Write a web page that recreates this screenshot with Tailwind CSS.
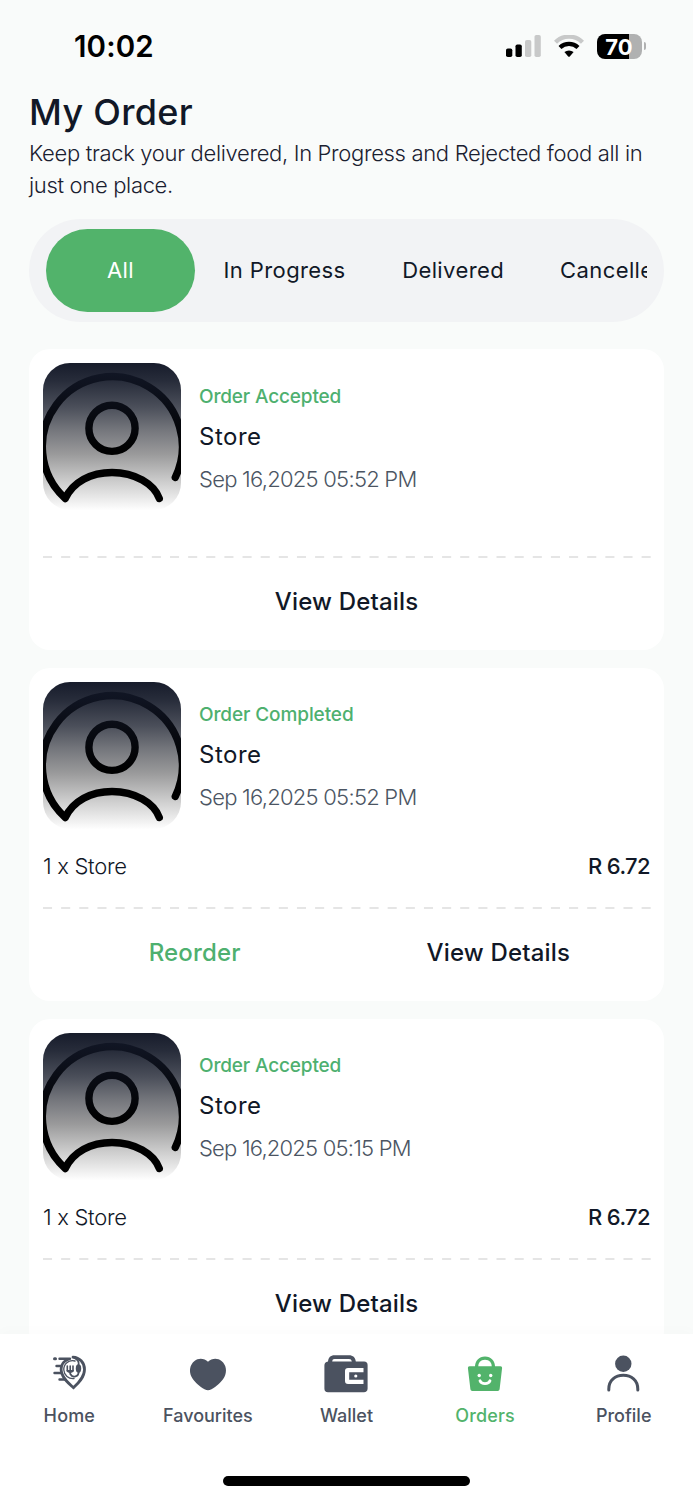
<!DOCTYPE html>
<html lang="en">
<head>
<meta charset="utf-8">
<title>My Order</title>
<script src="https://cdn.jsdelivr.net/npm/@tailwindcss/browser@4"></script>
</head>
<body class="relative flex h-[1500px] w-[693px] flex-col overflow-hidden bg-[#f9fbfa] font-['Inter','Liberation_Sans',sans-serif] text-[#111827]">

<svg class="absolute h-0 w-0" aria-hidden="true">
  <defs>
    <linearGradient id="bg" x1="0" y1="0" x2="0" y2="1">
      <stop offset="0" stop-color="#171c2b"/>
      <stop offset=".12" stop-color="#272c3a"/>
      <stop offset=".3" stop-color="#4b4f5a"/>
      <stop offset=".45" stop-color="#73757b"/>
      <stop offset=".62" stop-color="#9a9a9b"/>
      <stop offset=".8" stop-color="#cbcbcb"/>
      <stop offset="1" stop-color="#fefefe"/>
    </linearGradient>
    <linearGradient id="ink" gradientUnits="userSpaceOnUse" x1="0" y1="8" x2="0" y2="90">
      <stop offset="0" stop-color="#111625"/>
      <stop offset="1" stop-color="#000"/>
    </linearGradient>
    <symbol id="avatar" viewBox="0 0 138 147">
      <rect width="138" height="147" fill="url(#bg)"/>
      <g fill="none" stroke="url(#ink)" stroke-width="7.4" stroke-linecap="round" stroke-linejoin="round">
        <circle cx="69" cy="65.3" r="23.1"/>
        <path d="M132.3 114.3A70 70 0 1 0 22.3 135.5C30 119 48 109.500 69 109.500C92 109.500 111 121 116.300 135.500"/>
      </g>
    </symbol>
  </defs>
</svg>

<header class="flex h-[91px] shrink-0 items-start justify-between pl-[74px] pr-[47px] pt-[26px]">
  <time class="text-[29.5px] leading-10 font-semibold tracking-[0.1px] text-black">10:02</time>
  <div class="flex h-10 items-center gap-[13px]">
    <svg class="h-[22px] w-[35px]" viewBox="0 0 35 22"><g fill="#000"><rect y="13.5" width="6.3" height="8.5" rx="1.8"/><rect x="9.5" y="9.5" width="6.3" height="12.5" rx="1.8"/></g><g fill="#c8c9c9"><rect x="19" y="5" width="6.3" height="17" rx="1.8"/><rect x="28.5" width="6.3" height="22" rx="1.8"/></g></svg>
    <svg class="h-[22px] w-[30px]" viewBox="0 0 30 22"><path d="M1.500 7.300A19 19 0 0 1 28.500 7.300" fill="none" stroke="#c8c9c9" stroke-width="4.400"/><path d="M6 12.500A13 13 0 0 1 24 12.500" fill="none" stroke="#000" stroke-width="4.200"/><path d="M10.400 17.100A7 7 0 0 1 19.600 17.100L15.800 21.400Q15 22.200 14.200 21.400Z"/></svg>
    <div class="flex items-center gap-[2px]">
      <div class="flex h-[25px] w-[45px] items-center justify-center rounded-[8px] bg-linear-to-r from-black from-[71%] to-[#b0b1b1] to-[71%] pt-[1px] text-[22px] leading-none font-bold text-white">70</div>
      <div class="h-[8px] w-[2.5px] rounded-r-full bg-[#b0b1b1]"></div>
    </div>
  </div>
</header>

<main class="flex min-h-0 flex-1 flex-col px-[29px]">
  <h1 class="pt-[1px] text-[36px] leading-10 font-medium tracking-[0.3px] whitespace-nowrap">My Order</h1>
  <p class="mt-[5px] h-16 text-[22px] leading-8 font-light tracking-[-0.33px] whitespace-nowrap text-[#1a2030]">Keep track your delivered, In Progress and Rejected food all in<br>just one place.</p>

  <nav class="mt-[18px] h-[103px] shrink-0 rounded-full bg-[#f2f3f5] px-[17px] py-[10px]">
    <div class="flex h-full overflow-hidden text-[22px] tracking-[0.4px] whitespace-nowrap">
      <div class="flex w-[149px] shrink-0 items-center justify-center rounded-[42px] bg-[#52b36b] text-white">All</div>
      <div class="flex shrink-0 items-center px-[28.5px]">In Progress</div>
      <div class="flex shrink-0 items-center px-[28px]">Delivered</div>
      <div class="flex shrink-0 items-center px-[28px]">Cancelled</div>
    </div>
  </nav>

  <article class="mt-[27px] h-[301px] shrink-0 rounded-[21px] bg-white px-[14px] pt-[14px]">
    <div class="flex h-[147px] gap-[18px]">
      <svg class="h-[147px] w-[138px] rounded-[27px]"><use href="#avatar"/></svg>
      <div class="flex flex-col pt-[21px]">
        <span class="text-[19px] leading-[26px] font-[450] tracking-[-0.15px] text-[#4eb06f]">Order Accepted</span>
        <span class="mt-[10px] text-[24px] leading-[34px] tracking-[0.5px]">Store</span>
        <span class="mt-[8px] text-[22px] leading-[34px] font-[350] tracking-[-0.75px] text-[#4b5563]">Sep 16,2025 05:52 PM</span>
      </div>
    </div>
    <svg class="mt-[46px] h-[2px] w-[608px]"><path d="M0 1H608" stroke="#e5e5e5" stroke-width="2" stroke-dasharray="9.07 9.07"/></svg>
    <div class="flex h-[84px] items-center justify-center pt-[3px] text-[24px] font-[450] tracking-[0.18px]">View Details</div>
  </article>

  <article class="mt-[18px] h-[333px] shrink-0 rounded-[21px] bg-white px-[14px] pt-[14px]">
    <div class="flex h-[147px] gap-[18px]">
      <svg class="h-[147px] w-[138px] rounded-[27px]"><use href="#avatar"/></svg>
      <div class="flex flex-col pt-[20px]">
        <span class="text-[19px] leading-[26px] font-[450] tracking-[-0.1px] text-[#4eb06f]">Order Completed</span>
        <span class="mt-[10px] text-[24px] leading-[34px] tracking-[0.5px]">Store</span>
        <span class="mt-[8px] text-[22px] leading-[34px] font-[350] tracking-[-0.75px] text-[#4b5563]">Sep 16,2025 05:52 PM</span>
      </div>
    </div>
    <div class="mt-[21px] flex h-8 items-center justify-between text-[22px] whitespace-nowrap">
      <span class="font-light tracking-[-0.3px]">1 x Store</span><span class="font-[450] tracking-[-0.6px]">R 6.72</span>
    </div>
    <svg class="mt-[25px] h-[2px] w-[608px]"><path d="M0 1H608" stroke="#e5e5e5" stroke-width="2" stroke-dasharray="9.07 9.07"/></svg>
    <div class="grid h-[84px] grid-cols-2 items-center pt-[3px] text-center text-[24px] font-[450] tracking-[0.18px]"><span class="text-[#4eb06f]">Reorder</span><span>View Details</span></div>
  </article>

  <article class="mt-[18px] h-[333px] shrink-0 rounded-[21px] bg-white px-[14px] pt-[14px]">
    <div class="flex h-[147px] gap-[18px]">
      <svg class="h-[147px] w-[138px] rounded-[27px]"><use href="#avatar"/></svg>
      <div class="flex flex-col pt-[20px]">
        <span class="text-[19px] leading-[26px] font-[450] tracking-[-0.15px] text-[#4eb06f]">Order Accepted</span>
        <span class="mt-[10px] text-[24px] leading-[34px] tracking-[0.5px]">Store</span>
        <span class="mt-[8px] text-[22px] leading-[34px] font-[350] tracking-[-0.8px] text-[#4b5563]">Sep 16,2025 05:15 PM</span>
      </div>
    </div>
    <div class="mt-[21px] flex h-8 items-center justify-between text-[22px] whitespace-nowrap">
      <span class="font-light tracking-[-0.3px]">1 x Store</span><span class="font-[450] tracking-[-0.6px]">R 6.72</span>
    </div>
    <svg class="mt-[25px] h-[2px] w-[608px]"><path d="M0 1H608" stroke="#e5e5e5" stroke-width="2" stroke-dasharray="9.07 9.07"/></svg>
    <div class="flex h-[84px] items-center justify-center pt-[3px] text-[24px] font-[450] tracking-[0.18px]">View Details</div>
  </article>
</main>

<footer class="absolute inset-x-0 bottom-0 flex h-[166px] flex-col items-center bg-white shadow-[0_-4px_12px_rgba(0,0,0,0.015)]">
  <div class="grid w-full grid-cols-5 pt-[19px] text-[18px] leading-6 font-medium text-[#4b5260]">
    <div class="flex flex-col items-center gap-[9px]">
      <svg class="h-[42px] w-[44px]" viewBox="0 0 44 42" fill="none" stroke="#4b5260" stroke-linecap="round">
        <path d="M7.500 5.700H8.500" stroke-width="3"/>
        <path d="M12.500 5.700H23M9.500 13H14M7.500 20H14.500M12.500 26.500H18" stroke-width="2.400"/>
        <path d="M21 6.500C14 9 12.500 16.500 16 23C18.500 28 23 31.500 26.500 34.700C31 30.500 37.500 24.500 37.500 16.500C37.500 9.500 32.500 4.500 26 4.200" stroke-width="2.800"/>
        <path d="M28 8C21.500 6.500 16.500 11 16.800 17C17.200 22.500 21.500 26 27 25.500" stroke-width="1.300"/>
        <path d="M26.500 4.600C31 6.500 32.500 9 31.500 13" stroke-width="1.600"/>
        <ellipse cx="31.500" cy="15.500" rx="2.700" ry="4.200" fill="#4b5260" stroke="none"/>
        <path d="M31.700 18C32 24 25.500 25.500 23.500 21" stroke-width="1.800"/>
        <path d="M20.300 13V18M23.200 13V21M26 13V18" stroke-width="1.600"/>
        <path d="M19.500 17H26.800C26.800 21 19.500 21 19.500 17Z" fill="#4b5260" stroke="none"/>
      </svg>
      <span class="tracking-[0.14px]">Home</span>
    </div>
    <div class="flex flex-col items-center gap-[9px]">
      <svg class="h-[42px] w-[44px]" viewBox="0 0 44 42"><path fill="#4b5260" d="M22 8.800C18.500 5.300 12.500 4.700 8.500 8C3.600 12 2.800 18.500 5.600 24C8 28.800 14 33.800 18.500 36.300C21 37.600 23 37.600 25.500 36.300C30 33.800 36 28.800 38.400 24C41.200 18.500 40.400 12 35.500 8C31.500 4.700 25.500 5.300 22 8.800Z"/></svg>
      <span>Favourites</span>
    </div>
    <div class="flex flex-col items-center gap-[9px]">
      <svg class="h-[42px] w-[44px]" viewBox="0 0 44 42"><path fill="#4b5260" fill-rule="evenodd" d="M4 8.500C4.500 4.500 6.500 2.300 10.500 2.300H25C29 2.300 31.300 4.500 31.800 8.500H40C42.500 8.500 43.600 10 43.600 12V35.500C43.600 38 42 39.200 40 39.200H4C1.600 39.200.4 38 .4 35.500V12.500C.4 10.500 1.600 8.800 4 8.500ZM8.200 8.500H27.800C27.500 6.800 26.700 6 25 6H10.500C9 6 8.400 6.800 8.200 8.500ZM39.500 15H24Q21 15 21 18V28Q21 31 24 31H39.500V26.800H25.200V19.200H39.500Z"/><circle cx="31.8" cy="23" r="1.600" fill="#fff"/></svg>
      <span>Wallet</span>
    </div>
    <div class="flex flex-col items-center gap-[9px] text-[#52b36b]">
      <svg class="h-[42px] w-[44px]" viewBox="0 0 44 42"><path d="M13.500 14.500C13.500 8.500 17 5.200 22 5.200S30.500 8.500 30.500 14.500" fill="none" stroke="#52b36b" stroke-width="3.200"/><path d="M6.500 13.300H37.500Q39.300 13.300 39.100 15L36.600 36.300Q36.400 38 34.700 38H9.300Q7.600 38 7.400 36.300L4.900 15Q4.700 13.300 6.500 13.300Z" fill="#52b36b"/><circle cx="16.200" cy="22.500" r="1.700" fill="#fff"/><circle cx="27.700" cy="22.500" r="1.700" fill="#fff"/><path d="M17 27.700C18.500 31.600 25.500 31.600 27 27.700" fill="none" stroke="#fff" stroke-width="2.800" stroke-linecap="round"/></svg>
      <span class="tracking-[0.15px]">Orders</span>
    </div>
    <div class="flex flex-col items-center gap-[9px]">
      <svg class="h-[42px] w-[44px]" viewBox="0 0 44 42"><circle cx="21.300" cy="10.800" r="8.200" fill="#4b5260"/><path d="M6.800 37V36C6.800 27 13.300 22.300 21.300 22.300S35.800 27 35.800 36V37" fill="none" stroke="#4b5260" stroke-width="3" stroke-linecap="round"/></svg>
      <span>Profile</span>
    </div>
  </div>
  <div class="mt-[48px] h-[9.500px] w-[247px] rounded-full bg-black"></div>
</footer>
</body>
</html>
